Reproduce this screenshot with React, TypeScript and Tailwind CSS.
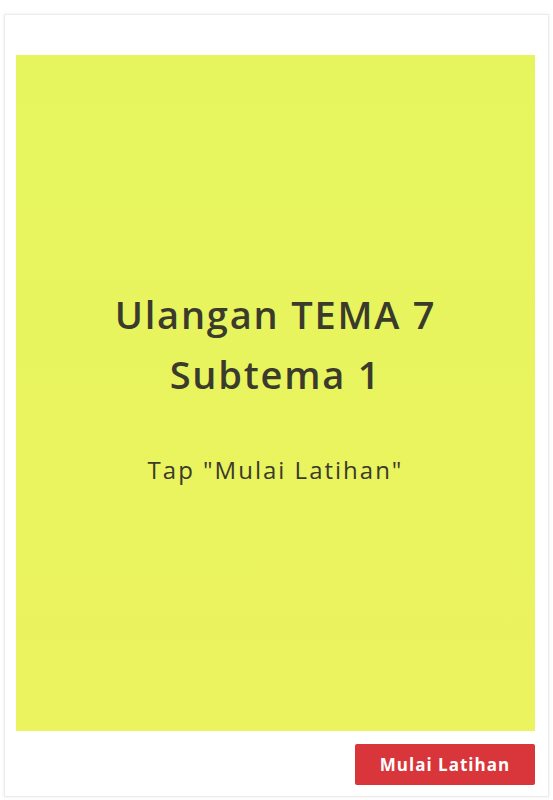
export default function App() {
  return (
    <div className="min-h-screen bg-white pt-[14px] px-[4px] pb-[3px]" style={{ fontFamily: '"Open Sans", sans-serif' }}>
      <div className="flex h-[783px] flex-col border border-[#ececec] bg-white pl-[11px] pr-[13px] pt-[40px] shadow-[0_0_3px_rgba(0,0,0,0.08)]">
        <div className="flex h-[676px] flex-col items-center bg-gradient-to-b from-[#e6f55e] to-[#ebf35f] text-[#3b3b2c]">
          <h1 className="mt-[229px] text-center text-[38px] font-semibold leading-[60px] tracking-[1.8px]">
            Ulangan TEMA 7
            <br />
            Subtema 1
          </h1>
          <p className="mt-[51px] text-[24px] leading-[30px] tracking-[2px]">Tap "Mulai Latihan"</p>
        </div>
        <div className="flex justify-end pt-[13px]">
          <button className="h-[41px] w-[180px] rounded-[2px] bg-[#d8363a] text-[17px] font-bold tracking-[1px] text-white">
            Mulai Latihan
          </button>
        </div>
      </div>
    </div>
  );
}
